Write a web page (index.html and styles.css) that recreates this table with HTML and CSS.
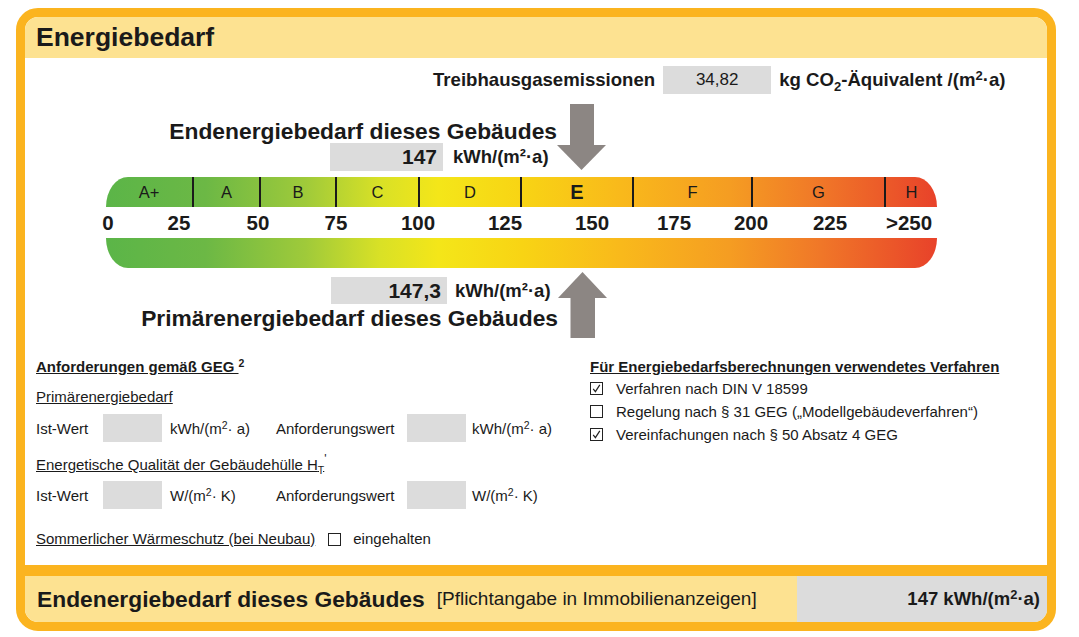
FILE: index.html
```html
<!DOCTYPE html>
<html lang="de">
<head>
<meta charset="utf-8">
<title>Energiebedarf</title>
<link rel="stylesheet" href="styles.css">
</head>
<body>
<div class="frame">
  <div class="head">Energiebedarf</div>
  <div class="content">
    <div class="ghg">
      <span class="ghg-l">Treibhausgasemissionen</span>
      <span class="ghg-box">34,82</span>
      <span class="ghg-u">kg CO<sub>2</sub>-Äquivalent /(m<sup>2</sup>·a)</span>
    </div>

    <div class="end">
      <div class="col">
        <div class="big-title">Endenergiebedarf dieses Gebäudes</div>
        <div class="val-row"><span class="val-box">147</span><span class="val-unit">kWh/(m²·a)</span></div>
      </div>
      <svg class="arrow" viewBox="0 0 49 66" aria-hidden="true">
        <rect x="13" y="0" width="24" height="41" fill="#8c8683"/>
        <polygon points="0,41 49,41 24.5,66" fill="#8c8683"/>
      </svg>
    </div>

    <div class="scale">
      <div class="bar-top">
        <div class="seg">A+</div>
        <div class="seg">A</div>
        <div class="seg">B</div>
        <div class="seg">C</div>
        <div class="seg">D</div>
        <div class="seg cur">E</div>
        <div class="seg">F</div>
        <div class="seg">G</div>
        <div class="seg">H</div>
      </div>
      <div class="nums">
        <span>0</span><span>25</span><span>50</span><span>75</span><span>100</span><span>125</span><span>150</span><span>175</span><span>200</span><span>225</span><span>&gt;250</span>
      </div>
      <div class="bar-bottom"></div>
    </div>

    <div class="prim">
      <div class="col">
        <div class="val-row"><span class="val-box">147,3</span><span class="val-unit">kWh/(m²·a)</span></div>
        <div class="big-title">Primärenergiebedarf dieses Gebäudes</div>
      </div>
      <svg class="arrow" viewBox="0 0 49 66" aria-hidden="true">
        <polygon points="24.5,0 0,26 49,26" fill="#8c8683"/>
        <rect x="12.5" y="26" width="24.5" height="40" fill="#8c8683"/>
      </svg>
    </div>

    <div class="lower">
      <div class="req">
        <div class="h"><span class="u">Anforderungen gemäß GEG </span><sup>2</sup></div>
        <div class="sub-h"><span class="u">Primärenergiebedarf</span></div>
        <div class="row">
          <span class="lbl">Ist-Wert</span><span class="box"></span><span class="unit">kWh/(m<sup>2</sup>· a)</span>
          <span class="lbl2">Anforderungswert</span><span class="box"></span><span class="unit unit2">kWh/(m<sup>2</sup>· a)</span>
        </div>
        <div class="sub-h sub-h2"><span class="u">Energetische Qualität der Gebäudehülle H<sub>T</sub></span><sup class="prime">'</sup></div>
        <div class="row row2">
          <span class="lbl">Ist-Wert</span><span class="box"></span><span class="unit">W/(m<sup>2</sup>· K)</span>
          <span class="lbl2">Anforderungswert</span><span class="box"></span><span class="unit unit2">W/(m<sup>2</sup>· K)</span>
        </div>
        <div class="summer">
          <span class="u">Sommerlicher Wärmeschutz (bei Neubau)</span>
          <span class="cb"></span>
          <span>eingehalten</span>
        </div>
      </div>
      <div class="proc">
        <div class="h"><span class="u">Für Energiebedarfsberechnungen verwendetes Verfahren</span></div>
        <div class="opt">
          <span class="cb"><svg viewBox="0 0 11 11" aria-hidden="true"><path d="M2.2 5.8 L4.4 8.6 L8.8 1.8" fill="none" stroke="#222" stroke-width="1.2"/></svg></span>
          <span>Verfahren nach DIN V 18599</span>
        </div>
        <div class="opt">
          <span class="cb"></span>
          <span>Regelung nach § 31 GEG („Modellgebäudeverfahren“)</span>
        </div>
        <div class="opt">
          <span class="cb"><svg viewBox="0 0 11 11" aria-hidden="true"><path d="M2.2 5.8 L4.4 8.6 L8.8 1.8" fill="none" stroke="#222" stroke-width="1.2"/></svg></span>
          <span>Vereinfachungen nach § 50 Absatz 4 GEG</span>
        </div>
      </div>
    </div>
  </div>
  <div class="foot">
    <span class="foot-t">Endenergiebedarf dieses Gebäudes</span>
    <span class="foot-n">[Pflichtangabe in Immobilienanzeigen]</span>
    <span class="foot-v">147 kWh/(m<sup>2</sup>·a)</span>
  </div>
</div>
</body>
</html>
```

FILE: styles.css
```css
body {
  margin: 0;
  background: #ffffff;
  font-family: "Liberation Sans", Arial, Helvetica, sans-serif;
  color: #1a1a1a;
}

sup {
  font-size: 0.7em;
  line-height: 0;
  vertical-align: 0.5em;
}

sub {
  font-size: 0.7em;
  line-height: 0;
  vertical-align: -0.35em;
}

.frame {
  box-sizing: border-box;
  width: 1040px;
  height: 623px;
  margin: 8px 0 0 16px;
  border: 9px solid #fbb41f;
  border-radius: 22px;
  overflow: hidden;
  background: #ffffff;
  display: flex;
  flex-direction: column;
}

.head {
  flex: none;
  height: 41px;
  line-height: 41px;
  padding-left: 11px;
  background: #fde291;
  font-size: 26.5px;
  font-weight: bold;
}

.content {
  flex: none;
  box-sizing: border-box;
  height: 507px;
  padding-top: 8px;
}

/* Treibhausgas row */
.ghg {
  display: flex;
  align-items: center;
  height: 28px;
  margin-left: 408px;
  font-size: 18.6px;
  font-weight: bold;
}

.ghg-box {
  width: 108px;
  height: 28px;
  line-height: 28px;
  margin: 0 8px;
  background: #dcdcdc;
  text-align: center;
  font-size: 17px;
  font-weight: normal;
}

/* Endenergie / Primärenergie blocks */
.end {
  display: flex;
  align-items: flex-end;
  margin-top: 10px;
}

.end .col {
  width: 532px;
}

.big-title {
  font-size: 22.8px;
  font-weight: bold;
  line-height: 24px;
  text-align: right;
}

.val-row {
  display: flex;
  align-items: center;
  height: 28px;
}

.end .val-row {
  padding-left: 305px;
}

.val-box {
  box-sizing: border-box;
  width: 113px;
  height: 28px;
  line-height: 28px;
  padding-right: 6px;
  background: #dcdcdc;
  text-align: right;
  font-size: 21px;
  font-weight: bold;
}

.val-unit {
  margin-left: 10px;
  font-size: 18.5px;
  font-weight: bold;
}

.arrow {
  display: block;
  flex: none;
  width: 49px;
  height: 66px;
}

.end .arrow {
  margin-bottom: 1px;
}

.prim {
  display: flex;
  align-items: flex-start;
  margin-top: 4px;
}

.prim .col {
  width: 533px;
  padding-top: 5px;
}

.prim .val-row {
  height: 27px;
  padding-left: 306px;
}

.prim .val-box {
  width: 116px;
  height: 27px;
  line-height: 27px;
}

.prim .val-unit {
  margin-left: 8px;
}

.prim .big-title {
  margin-top: 2px;
}

/* Scale */
.scale {
  width: 831px;
  margin: 6px 0 0 81px;
}

.bar-top,
.bar-bottom {
  background: linear-gradient(to right,
    #5bb548 0%,
    #6cb845 12%,
    #9fca3a 24%,
    #d9e126 33%,
    #f4e619 40%,
    #f8d414 50%,
    #f9b91b 62%,
    #f59d22 75%,
    #f07728 86%,
    #e8422a 100%);
}

.bar-top {
  display: grid;
  grid-template-columns: 86px 67px 76px 83px 102px 112px 119px 133px 53px;
  height: 30px;
  border-radius: 22px 22px 0 0 / 30px 30px 0 0;
}

.seg {
  display: flex;
  align-items: center;
  justify-content: center;
  border-left: 2px solid #1a1a1a;
  font-size: 16.5px;
}

.seg:first-child {
  border-left: none;
}

.seg.cur {
  font-size: 20px;
  font-weight: bold;
}

.nums {
  display: flex;
  align-items: center;
  height: 31px;
  font-size: 20.5px;
  font-weight: bold;
}

.nums span {
  flex: none;
  width: 60px;
  text-align: center;
}

.nums span:nth-child(1) { margin-left: -28px; }
.nums span:nth-child(2) { margin-left: 11px; }
.nums span:nth-child(3) { margin-left: 19px; }
.nums span:nth-child(4) { margin-left: 18px; }
.nums span:nth-child(5) { margin-left: 22px; }
.nums span:nth-child(6) { margin-left: 27px; }
.nums span:nth-child(7) { margin-left: 27px; }
.nums span:nth-child(8) { margin-left: 22px; }
.nums span:nth-child(9) { margin-left: 17px; }
.nums span:nth-child(10) { margin-left: 19px; }
.nums span:nth-child(11) { margin-left: 19px; }

.bar-bottom {
  height: 30px;
  border-radius: 0 0 22px 22px / 0 0 30px 30px;
}

/* Lower section */
.lower {
  display: flex;
  margin-top: 20px;
  padding-left: 11px;
  font-size: 15px;
}

.req {
  width: 554px;
}

.h {
  font-weight: bold;
  line-height: 18px;
}

.u {
  text-decoration: underline;
}

.sub-h {
  line-height: 18px;
  margin-top: 12px;
}

.sub-h2 {
  margin-top: 14px;
}

.prime {
  font-size: 0.8em;
  vertical-align: 0.6em;
}

.row {
  display: flex;
  align-items: center;
  height: 28px;
  margin-top: 8px;
}

.row2 {
  margin-top: 7px;
}

.lbl {
  width: 67px;
}

.box {
  width: 59px;
  height: 28px;
  background: #dcdcdc;
}

.unit {
  box-sizing: border-box;
  width: 114px;
  padding-left: 8px;
}

.unit2 {
  width: auto;
  padding-left: 6px;
}

.lbl2 {
  width: 131px;
}

.summer {
  display: flex;
  align-items: center;
  margin-top: 21px;
  line-height: 18px;
}

.cb {
  display: flex;
  align-items: center;
  justify-content: center;
  box-sizing: border-box;
  width: 13px;
  height: 13px;
  border: 1px solid #222222;
  background: #ffffff;
}

.cb svg {
  width: 11px;
  height: 11px;
}

.summer .cb {
  margin: 0 12px 0 13px;
}

.opt {
  display: flex;
  align-items: center;
  height: 23px;
}

.proc .h {
  margin-bottom: 1px;
}

.opt .cb {
  margin-right: 13px;
}

/* Footer */
.foot {
  flex: none;
  display: flex;
  align-items: center;
  height: 46px;
  border-top: 11px solid #fbb41f;
  background: #fde291;
}

.foot-t {
  padding-left: 12px;
  font-size: 22.8px;
  font-weight: bold;
}

.foot-n {
  margin-left: 12px;
  font-size: 19px;
}

.foot-v {
  box-sizing: border-box;
  width: 250px;
  height: 46px;
  line-height: 46px;
  margin-left: auto;
  padding-right: 7px;
  background: #dcdcdc;
  text-align: right;
  font-size: 18.5px;
  font-weight: bold;
}
```
